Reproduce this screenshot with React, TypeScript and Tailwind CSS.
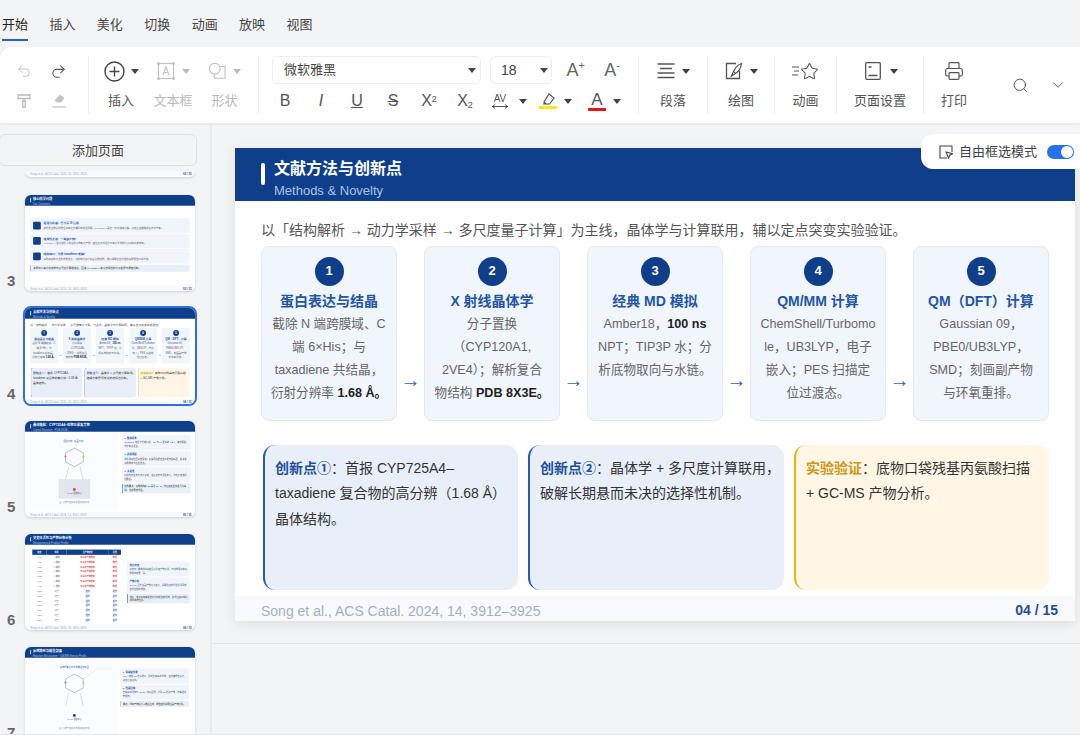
import React from "react";
import { Undo2, Redo2, Printer, Search, ChevronDown, Star } from "lucide-react";

const SANS = "font-['Liberation_Sans','Noto_Sans_CJK_SC',sans-serif]";

function Caret({ className = "text-[#444]" }: { className?: string }) {
  return (
    <svg width="8" height="5" viewBox="0 0 8 5" className={className}>
      <path d="M0 0h8L4 5z" fill="currentColor" />
    </svg>
  );
}

function Brush() {
  return (
    <svg width="16" height="16" viewBox="0 0 16 16" fill="none" stroke="#bbb" strokeWidth="1.3">
      <path d="M2 2h12v3.5H2zM8 5.5V8M8 8h0M6.8 8h2.4v6H6.8z" />
    </svg>
  );
}

function EraserIcon() {
  return (
    <svg width="16" height="16" viewBox="0 0 16 16" fill="none">
      <path d="M9 1.5l4.5 3.5-3.5 4.5H6L3.5 7.5z" fill="#c4c4c4" />
      <path d="M1.5 14h13" stroke="#c4c4c4" strokeWidth="1.3" />
    </svg>
  );
}

function PlusCircle() {
  return (
    <svg width="21" height="21" viewBox="0 0 21 21" fill="none" stroke="#444" strokeWidth="1.4">
      <circle cx="10.5" cy="10.5" r="9.5" />
      <path d="M10.5 5.5v10M5.5 10.5h10" />
    </svg>
  );
}

function TextBoxIcon() {
  return (
    <svg width="20" height="20" viewBox="0 0 20 20" fill="none" stroke="#c2c2c2" strokeWidth="1.2">
      <rect x="2.5" y="2.5" width="15" height="15" />
      <path d="M7 14l3-8 3 8M8 11.5h4" />
      <g fill="#c2c2c2" stroke="none">
        <circle cx="2.5" cy="2.5" r="1.6" />
        <circle cx="17.5" cy="2.5" r="1.6" />
        <circle cx="2.5" cy="17.5" r="1.6" />
        <circle cx="17.5" cy="17.5" r="1.6" />
      </g>
    </svg>
  );
}

function ShapeIcon() {
  return (
    <svg width="18" height="18" viewBox="0 0 20 20" fill="none" stroke="#c2c2c2" strokeWidth="1.2">
      <path d="M13 5h6v13H7v-5" />
      <circle cx="7.5" cy="7.5" r="6" fill="#fff" />
    </svg>
  );
}

function ParagraphIcon() {
  return (
    <svg width="18" height="16" viewBox="0 0 18 16" fill="none" stroke="#555" strokeWidth="1.3">
      <path d="M0.5 1h17M3 5.5h12M0.5 10h17M0.5 14.5h17" />
    </svg>
  );
}

function DrawIcon() {
  return (
    <svg width="18" height="18" viewBox="0 0 18 18" fill="none" stroke="#555" strokeWidth="1.3">
      <path d="M11 1.5H1.5v15h13V9" />
      <path d="M16.5 1.5c-3 1-6.5 4.500-8 8l2 2c3.500-2 5.500-6 6-10zM8 10.500l-1.500 3.500 3.500-2" />
    </svg>
  );
}

function AnimIcon() {
  return (
    <div className="flex items-center">
      <svg width="8" height="14" viewBox="0 0 8 14" fill="none" stroke="#555" strokeWidth="1.2">
        <path d="M0 3h7M2 7h5M0 11h6" />
      </svg>
      <Star size={19} strokeWidth={1.3} color="#555" />
    </div>
  );
}

function PageIcon() {
  return (
    <svg width="16" height="18" viewBox="0 0 16 18" fill="none" stroke="#555" strokeWidth="1.3">
      <rect x="0.7" y="0.7" width="14.600" height="16.600" rx="1" />
      <path d="M3.500 5h3M3.500 13.500h9" />
    </svg>
  );
}

function HighlightIcon() {
  return (
    <div className="flex flex-col items-center">
      <svg width="14" height="13" viewBox="0 0 14 13" fill="none">
        <path d="M8 1l5 4-4.500 6H5L3 9z" fill="#fff" stroke="#555" strokeWidth="1.200" />
        <path d="M3 9l2 2.500H2z" fill="#555" />
      </svg>
      <div className="h-[3px] w-[18px] bg-[#f5ec16]" />
    </div>
  );
}

function FreeSelIcon() {
  return (
    <svg width="14" height="14" viewBox="0 0 14 14" fill="none" stroke="#444" strokeWidth="1.100">
      <path d="M8 13H1V1h12v6" />
      <path d="M7 7l6.500 1.800-2.600 1.200L9.500 13z" fill="#fff" />
    </svg>
  );
}

function Divider() {
  return <div className="h-[58px] w-px shrink-0 bg-[#eeeeee]" />;
}

function IconGroup({ width, label, children }: { width: string; label: string; children: React.ReactNode }) {
  return (
    <div className={`${width} flex shrink-0 flex-col items-center`}>
      <div className="flex h-[30px] items-center gap-[7px]">{children}</div>
      <div className="mt-[3px] h-[24px] text-[13px] leading-[24px] text-[#555]">{label}</div>
    </div>
  );
}

function Toolbar() {
  return (
    <div className="flex h-[76px] items-start rounded-tl-xl bg-white pt-[9px] shadow-[0_1px_3px_rgba(0,0,0,0.07)]">
      <div className="grid w-[88px] shrink-0 grid-cols-2 pl-[6px] pr-[12px]">
        <div className="flex h-[30px] items-center justify-center"><Undo2 size={16} strokeWidth={1.3} color="#bbb" /></div>
        <div className="flex h-[30px] items-center justify-center"><Redo2 size={17} strokeWidth={1.5} color="#555" /></div>
        <div className="mt-[3px] flex h-[24px] items-center justify-center"><Brush /></div>
        <div className="mt-[3px] flex h-[24px] items-center justify-center"><EraserIcon /></div>
      </div>
      <Divider />
      <div className="flex w-[169px] shrink-0 pl-[8px]">
        <div className="flex w-[48px] flex-col items-center">
          <div className="flex h-[30px] items-center gap-[6px]"><PlusCircle /><Caret /></div>
          <div className="mt-[3px] text-[13px] leading-[24px] text-[#555]">插入</div>
        </div>
        <div className="flex w-[56px] flex-col items-center">
          <div className="flex h-[30px] items-center gap-[6px]"><TextBoxIcon /><Caret className="text-[#bbb]" /></div>
          <div className="mt-[3px] text-[13px] leading-[24px] text-[#bbb]">文本框</div>
        </div>
        <div className="flex w-[47px] flex-col items-center">
          <div className="flex h-[30px] items-center gap-[7px]"><ShapeIcon /><Caret className="text-[#bbb]" /></div>
          <div className="mt-[3px] text-[13px] leading-[24px] text-[#bbb]">形状</div>
        </div>
      </div>
      <Divider />
      <div className="w-[379px] shrink-0">
        <div className="flex h-[28px] items-center pl-[13px]">
          <div className="flex h-[28px] w-[209px] items-center justify-between rounded-md border border-[#eeeeee] pl-[11px] pr-[4px] text-[13px] text-[#444]">
            <span>微软雅黑</span>
            <Caret />
          </div>
          <div className="ml-[9px] flex h-[28px] w-[62px] items-center justify-between rounded-md border border-[#eeeeee] pl-[10px] pr-[3px] text-[14px] text-[#444]">
            <span>18</span>
            <Caret />
          </div>
          <div className="flex w-[33px] justify-end text-[#666]"><span className="text-[18px]">A</span><span className="text-[11px]">+</span></div>
          <div className="flex w-[35px] justify-end text-[#666]"><span className="text-[18px]">A</span><span className="text-[11px]">-</span></div>
        </div>
        <div className="mt-[5px] flex h-[24px] items-center pl-[8px] text-[16px] text-[#555]">
          <div className="w-[36px] text-center">B</div>
          <div className="w-[36px] text-center italic">I</div>
          <div className="w-[36px] text-center underline">U</div>
          <div className="w-[36px] text-center line-through">S</div>
          <div className="w-[36px] text-center">X<sup className="text-[9px]">2</sup></div>
          <div className="w-[36px] text-center">X<sub className="text-[9px]">2</sub></div>
          <div className="flex w-[48px] items-center pl-[9px]">
            <div className="flex w-[16px] flex-col items-center text-[10px] leading-[10px]">
              <span>AV</span>
              <svg width="16" height="5" viewBox="0 0 16 5" fill="none" stroke="#555"><path d="M0 2.500h16M3 0.500L0.500 2.500 3 4.500M13 0.500l2.500 2-2.500 2" /></svg>
            </div>
            <div className="ml-[11px]"><Caret /></div>
          </div>
          <div className="flex w-[51px] items-center gap-[7px] pl-[8px]"><HighlightIcon /><Caret /></div>
          <div className="flex w-[48px] items-center gap-[7px] pl-[6px]">
            <div className="flex flex-col items-center leading-[17px]">
              <span className="text-[17px]">A</span>
              <div className="h-[3px] w-[18px] bg-[#e8141c]" />
            </div>
            <Caret />
          </div>
        </div>
      </div>
      <Divider />
      <IconGroup width="w-[68px]" label="段落"><ParagraphIcon /><Caret /></IconGroup>
      <Divider />
      <IconGroup width="w-[66px]" label="绘图"><DrawIcon /><Caret /></IconGroup>
      <Divider />
      <IconGroup width="w-[61px]" label="动画"><AnimIcon /></IconGroup>
      <Divider />
      <IconGroup width="w-[86px]" label="页面设置"><div className="ml-[3px]"><PageIcon /></div><div className="ml-[2px]"><Caret /></div></IconGroup>
      <Divider />
      <IconGroup width="w-[60px]" label="打印"><Printer size={20} strokeWidth={1.4} color="#555" /></IconGroup>
      <div className="flex h-[58px] flex-1 items-center gap-[20px] pl-[28px]">
        <Search size={17} strokeWidth={1.4} color="#555" />
        <ChevronDown size={18} strokeWidth={1.2} color="#555" />
      </div>
    </div>
  );
}

function Footer({ page }: { page: string }) {
  return (
    <div className="flex h-[25px] w-[840px] shrink-0 items-center justify-between bg-[#f7f9fc] pl-[26px] pr-[17px] text-[14px]">
      <span className="pt-[6px] text-[#aab0b8]">Song et al., ACS Catal. 2024, 14, 3912–3925</span>
      <span className="pt-[3px] font-bold text-[#1e4f9e]">{page}</span>
    </div>
  );
}

function Shell({ title, sub, page, children }: { title: string; sub: string; page: string; children: React.ReactNode }) {
  return (
    <div className={`${SANS} flex h-[473px] w-[840px] flex-col bg-white`}>
      <div className="flex h-[52.500px] shrink-0 items-center gap-[9px] bg-[#0f3f8a] pl-[26px]">
        <div className="h-[22px] w-[4px] rounded-sm bg-white" />
        <div className="pt-[12px]">
          <div className="text-[16px] font-bold leading-[20px] text-white">{title}</div>
          <div className="mt-[2px] text-[13px] leading-[20px] text-[#a9c3e6]">{sub}</div>
        </div>
      </div>
      <div className="min-h-0 flex-1">{children}</div>
      <Footer page={page} />
    </div>
  );
}

const steps: { t: string; b: React.ReactNode }[] = [
  { t: "蛋白表达与结晶", b: <>截除 N 端跨膜域、C<br />端 6×His；与<br />taxadiene 共结晶，<br />衍射分辨率 <b className="text-[#222]">1.68 Å。</b></> },
  { t: "X 射线晶体学", b: <>分子置换<br />（CYP120A1,<br />2VE4）；解析复合<br />物结构 <b className="text-[#222]">PDB 8X3E。</b></> },
  { t: "经典 MD 模拟", b: <>Amber18，<b className="text-[#222]">100 ns</b><br />NPT；TIP3P 水；分<br />析底物取向与水链。</> },
  { t: "QM/MM 计算", b: <>ChemShell/Turbomo<br />le，UB3LYP，电子<br />嵌入；PES 扫描定<br />位过渡态。</> },
  { t: "QM（DFT）计算", b: <>Gaussian 09，<br />PBE0/UB3LYP，<br />SMD；刻画副产物<br />与环氧重排。</> },
];

function Slide4() {
  return (
    <Shell title="文献方法与创新点" sub="Methods & Novelty" page="04 / 15">
      <div className="px-[26px]">
        <div className="flex h-[45px] items-end whitespace-nowrap pb-[6px] text-[14px] leading-[20px] text-[#555]">
          以「结构解析 → 动力学采样 → 多尺度量子计算」为主线，晶体学与计算联用，辅以定点突变实验验证。
        </div>
        <div className="flex">
          {steps.map((s, i) => (
            <React.Fragment key={s.t}>
              {i > 0 && <div className="w-[27px] shrink-0 pt-[122px] text-center text-[20px] leading-[24px] text-[#2f66b5]">→</div>}
              <div className="flex h-[175px] w-[136px] shrink-0 flex-col items-center rounded-lg border border-[#e3e9f2] bg-[#f1f5fc] pt-[10px]">
                <div className="flex h-[29px] w-[29px] items-center justify-center rounded-full bg-[#0f3f8a] text-[13px] font-bold text-white">{i + 1}</div>
                <div className="mt-[5px] whitespace-nowrap text-[14px] font-bold leading-[20px] text-[#1f56a8]">{s.t}</div>
                <div className="mt-[2px] whitespace-nowrap text-center text-[12.600px] leading-[23px] text-[#666]">{s.b}</div>
              </div>
            </React.Fragment>
          ))}
        </div>
        <div className="ml-[2px] mt-[24px] flex gap-[10px] whitespace-nowrap text-[14px] leading-[25.500px] text-[#333]">
          <div className="h-[145px] w-[256px] rounded-xl border-l-[2.500px] border-[#2a5cab] bg-[#e8eff8] pl-[10px] pr-[4px] pt-[11px]">
            <b className="text-[#1e4f9e]">创新点①</b>：首报 CYP725A4–<br />taxadiene 复合物的高分辨（1.68 Å）<br />晶体结构。
          </div>
          <div className="h-[145px] w-[256px] rounded-xl border-l-[2.500px] border-[#2a5cab] bg-[#e8eff8] pl-[10px] pr-[4px] pt-[11px]">
            <b className="text-[#1e4f9e]">创新点②</b>：晶体学 + 多尺度计算联用，<br />破解长期悬而未决的选择性机制。
          </div>
          <div className="h-[145px] w-[256px] rounded-xl border-l-[2.500px] border-[#eab308] bg-[#fff6e6] pl-[10px] pr-[4px] pt-[11px]">
            <b className="text-[#d0971a]">实验验证</b>：底物口袋残基丙氨酸扫描<br />+ GC-MS 产物分析。
          </div>
        </div>
      </div>
    </Shell>
  );
}

function Slide3() {
  const rows = [
    ["瓶颈与机遇：巴卡亭 III 合成", "紫杉醇生物合成途径中氧化步骤尚未完全阐明，CYP725A4 是第一步关键氧化酶，决定后续通路的走向与产率。"],
    ["选择性之谜：一酶多产物？", "CYP725A4 催化紫杉二烯生成多种氧化产物，其位点选择性及环氧化重排的分子基础长期未知。"],
    ["结构缺口：为何 taxadiene 难解？", "底物高度疏水且构象柔性大，此前缺乏高分辨复合物结构，难以解释反应机理并指导理性工程改造。"],
  ];
  return (
    <Shell title="核心科学问题" sub="Key Questions" page="03 / 15">
      <div className="px-[26px] pt-[62px]">
        {rows.map((r) => (
          <div key={r[0]} className="mb-[4px] flex h-[72px] items-center gap-[14px] rounded-lg bg-[#f0f4fb] px-[14px]">
            <div className="h-[38px] w-[38px] rounded-md bg-[#0f3f8a]" />
            <div>
              <div className="text-[14px] font-bold text-[#1f56a8]">{r[0]}</div>
              <div className="mt-[4px] text-[12px] text-[#667]">{r[1]}</div>
            </div>
          </div>
        ))}
        <div className="mt-[6px] rounded-md border-l-[3px] border-[#2a5cab] bg-[#e8eff8] px-[12px] py-[8px] text-[12.500px] text-[#333]">
          本研究以高分辨结构与多尺度计算相结合，回答 CYP725A4 氧化选择性的分子起源与调控机制。
        </div>
      </div>
    </Shell>
  );
}

function InfoCards({ items, note, top }: { items: [string, string][]; note: string; top: string }) {
  return (
    <div className={`${top} flex w-[340px] shrink-0 flex-col gap-[5px]`}>
      {items.map((c) => (
        <div key={c[0]} className="rounded-md bg-[#f0f4fb] px-[12px] py-[8px]">
          <div className="text-[12px] font-bold text-[#1f56a8]">{c[0]}</div>
          <div className="mt-[3px] text-[11px] leading-[19px] text-[#556]">{c[1]}</div>
        </div>
      ))}
      <div className="rounded-md border-l-[3px] border-[#2a5cab] bg-[#e8eff8] px-[10px] py-[6px] text-[11px] leading-[18px] text-[#333]">{note}</div>
    </div>
  );
}

function Diagram({ title, wide }: { title: string; wide?: boolean }) {
  return (
    <div className="ml-[26px] h-[372px] w-[437px] shrink-0 rounded-md bg-[#fbfcfe]">
      <svg width="437" height="372" viewBox="0 0 437 372" fill="none">
        <text x="218" y="38" fontSize="11" fill="#1f56a8" textAnchor="middle">{title}</text>
        <path d="M218 68l44 24v44l-44 24-44-24V92z" stroke="#8e9ab0" strokeWidth="3" />
        <path d="M190 160l-15 65M246 160l15 65" stroke="#d4dae4" strokeWidth="4" />
        <circle cx="174" cy="110" r="5" fill="#e56a6a" />
        <circle cx="262" cy="110" r="5" fill="#e9c23c" />
        {wide ? (
          <rect x="140" y="222" width="156" height="96" fill="#e1e5ec" />
        ) : (
          <path d="M262 92l70-50h70" stroke="#d0d6e0" strokeWidth="2" />
        )}
        <circle cx="218" cy="272" r="7" fill={wide ? "#d84a4a" : "#0f3f8a"} />
        <text x="218" y="296" fontSize="10" fill="#445" textAnchor="middle">Fe–O 活性中心</text>
        <text x="218" y="340" fontSize="10" fill="#889" textAnchor="middle">图：底物与血红素的相对取向示意</text>
      </svg>
    </div>
  );
}

function Slide5() {
  return (
    <Shell title="晶体结构：CYP725A4–底物三维复合物" sub="Crystal Structure · PDB 8X3E" page="05 / 15">
      <div className="flex gap-[16px] pt-[13px]">
        <Diagram title="活性口袋（截面示意）" wide />
        <InfoCards
          top="mt-[3px]"
          items={[
            ["1. 整体折叠", "Taxadiene 结合于远端口袋，C5 与 Fe 距离约 4.3 Å，姿态明确，利于氧化发生。"],
            ["2. 关键残基", "疏水残基包围底物骨架。氢键网络稳定血红素丙酸基团，并决定底物朝向与反应位点。"],
            ["3. 水通道", "口袋内存在有序水分子链，连接溶剂与活性中心，为质子传递提供路径。"],
          ]}
          note="结构要点：底物朝向使 C5 靠近 Fe=O，为后续反应奠定几何基础，也解释选择性。"
        />
      </div>
    </Shell>
  );
}

function Slide6() {
  const rows = Array.from({ length: 14 }, (_, i) => i);
  return (
    <Shell title="突变体活性与产物分布分析" sub="Mutagenesis & Product Profile" page="06 / 15">
      <div className="flex gap-[30px] pl-[36px] pt-[24px]">
        <table className="h-[310px] w-[438px] shrink-0 text-[10px]">
          <thead>
            <tr className="h-[26px] bg-[#0f3f8a] text-white"><th>突变</th><th>位置</th><th>主产物变化</th><th>活性</th></tr>
          </thead>
          <tbody>
            {rows.map((i) => (
              <tr key={i} className="h-[24px] text-center text-[#667]">
                <td>{i < 7 ? `A${100 + i * 13}` : `L${210 + i * 9}`}</td>
                <td>{i < 7 ? "Ⅰ-螺旋" : "口袋"}</td>
                <td className={i < 7 ? "font-bold text-[#d84a4a]" : "font-bold text-[#1f56a8]"}>{i < 7 ? "环氧化产物增加" : "保持"}</td>
                <td className={i < 7 ? "font-bold text-[#d84a4a]" : "font-bold text-[#1f56a8]"}>{i < 7 ? "降低" : "保持"}</td>
              </tr>
            ))}
          </tbody>
        </table>
        <InfoCards
          top="mt-[58px] !w-[310px]"
          items={[
            ["热点突变", "口袋内 I 螺旋残基突变显著改变产物比例，与结构预测的底物取向结果一致。"],
            ["产物分析", "GC-MS 显示主副产物比值变化，说明位点选择性受到局部空间位阻的调控。"],
          ]}
          note="结论：定点突变实验支持计算提出的机制，并为后续工程化提供候选位点。"
        />
      </div>
    </Shell>
  );
}

function Slide7() {
  return (
    <Shell title="反应路径与能垒剖面" sub="Reaction Mechanism · QM/MM Energy Profile" page="07 / 15">
      <div className="flex gap-[8px] pt-[13px]">
        <Diagram title="底物环氧化与重排路径示意图" />
        <InfoCards
          top="mt-[40px] !w-[340px]"
          items={[
            ["1. 氢提取步骤", "Cpd I 夺取 C5 位氢原子，形成自由基中间体；该步骤能垒最低，决定后续走向。"],
            ["2. 羟基回弹", "自由基中间体与 Fe–OH 快速回弹，得到 5α-羟基产物，与实验观察相符。"],
          ]}
          note="要点：环氧产物经竞争路径生成，能垒差异解释主副产物比例。"
        />
      </div>
    </Shell>
  );
}

function Thumb({ n, active, children }: { n: number; active?: boolean; children: React.ReactNode }) {
  return (
    <div className="relative h-[113px] shrink-0 pl-[25px]">
      <div
        className={`h-[96px] w-[170px] overflow-hidden rounded-md bg-white shadow-[0_1px_3px_rgba(0,0,0,0.15)] ${
          active ? "outline-2 outline-[#2f6fe0]" : ""
        }`}
      >
        <div className="origin-top-left scale-[0.2024]">{children}</div>
      </div>
      <div className={`${SANS} absolute bottom-[18px] left-[7px] text-[15px] font-bold leading-[18px] text-[#666]`}>{n}</div>
    </div>
  );
}

function Sidebar() {
  return (
    <div className="flex w-[212px] shrink-0 flex-col overflow-hidden border-r-2 border-[#e9ebee]">
      <div className="-ml-[1px] mt-[11px] flex h-[32px] w-[198px] shrink-0 items-center justify-center rounded-md border border-[#dfe1e5] bg-[#f3f4f6] pt-[2px] text-[13px] text-[#444]">
        添加页面
      </div>
      <div className="mt-[5px] min-h-0 flex-1 overflow-hidden">
        <div className="mb-[18px] ml-[25px] h-[6px] w-[170px] overflow-hidden rounded-b-md bg-white shadow-[0_1px_3px_rgba(0,0,0,0.15)]">
          <div className="origin-top-left scale-[0.2024]"><Footer page="02 / 15" /></div>
        </div>
        <Thumb n={3}><Slide3 /></Thumb>
        <Thumb n={4} active><Slide4 /></Thumb>
        <Thumb n={5}><Slide5 /></Thumb>
        <Thumb n={6}><Slide6 /></Thumb>
        <Thumb n={7}><Slide7 /></Thumb>
      </div>
    </div>
  );
}

const tabs = ["开始", "插入", "美化", "切换", "动画", "放映", "视图"];

export default function App() {
  return (
    <div className={`${SANS} relative flex h-[735px] w-[1080px] flex-col overflow-hidden border-b border-[#e3e5e8] bg-[#f3f4f6]`}>
      <div className="flex h-[47px] shrink-0 gap-[21.400px] pl-[2px] pt-[13px] text-[13px] text-[#444]">
        {tabs.map((t, i) => (
          <div key={t} className={`h-[28px] leading-[24px] ${i === 0 ? "border-b-2 border-[#2263c9] text-[#222]" : ""}`}>{t}</div>
        ))}
      </div>
      <Toolbar />
      <div className="flex min-h-0 flex-1">
        <Sidebar />
        <div className="min-w-0 flex-1">
          <div className="h-[521px] border-b border-[#e3e5e8] pl-[23px] pt-[25px]">
            <div className="w-[840px] shadow-[0_3px_12px_rgba(0,0,0,0.09)]">
              <Slide4 />
            </div>
          </div>
        </div>
      </div>
      <div className="absolute left-[921px] top-[134px] flex h-[35px] w-[159px] items-center rounded-l-xl bg-white pl-[18px] text-[13px] text-[#444] shadow-[0_1px_3px_rgba(0,0,0,0.08)]">
        <FreeSelIcon />
        <span className="ml-[6px]">自由框选模式</span>
        <div className="ml-[10px] flex h-[14px] w-[27px] items-center justify-end rounded-full bg-[#2672ec] pr-[1px]">
          <div className="h-[12px] w-[12px] rounded-full bg-white" />
        </div>
      </div>
    </div>
  );
}
